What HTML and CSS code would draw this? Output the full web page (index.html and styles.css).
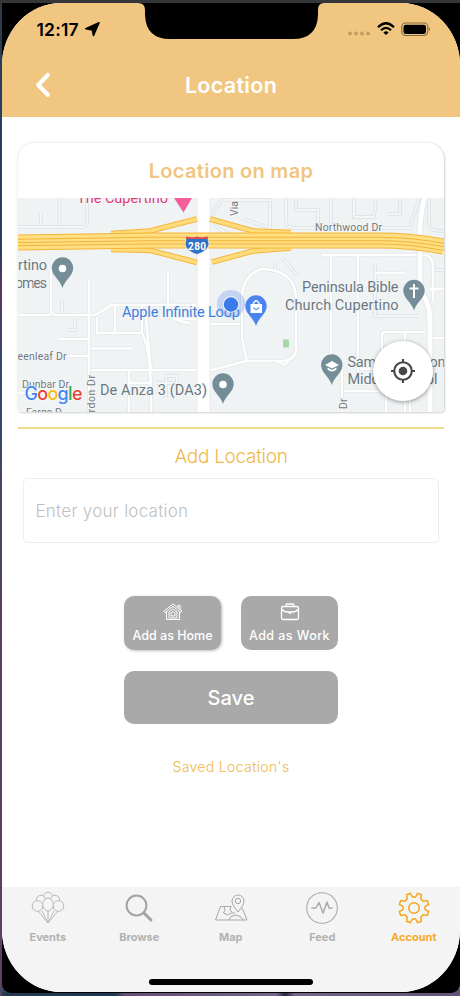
FILE: index.html
```html
<!DOCTYPE html>
<html lang="en">
<head>
<meta charset="utf-8">
<title>Location</title>
<link rel="stylesheet" href="styles.css">
</head>
<body>
<div class="device">
<div class="screen">
  <header class="header">
    <svg class="notch" viewBox="0 0 186 37" width="186" height="37"><path d="M0 0Q7 0 7 7V12Q8 36 32 36H155Q179 36 180 12V7Q180 0 186 0Z"/></svg>
    <div class="status">
      <div class="clock"><span>12:17</span><svg width="15" height="15" viewBox="0 0 15 15"><path d="M14 .8 8.500 13.500 7.400 8 .9 6.800Z" stroke="#000" stroke-width="1.600" stroke-linejoin="round"/></svg></div>
      <div class="signals">
        <svg width="23" height="15" viewBox="0 0 23 15" fill="#c39b63"><circle cx="2" cy="11.500" r="1.900"/><circle cx="8" cy="11.500" r="1.900"/><circle cx="14" cy="11.500" r="1.900"/><circle cx="20" cy="11.500" r="1.900"/></svg>
        <svg width="18" height="14" viewBox="0 0 18 14" fill="none" stroke="#000" stroke-width="2.300"><path d="M1 5.200Q9-2.600 17 5.200M4 8.300Q9 3.400 14 8.300"/><path d="M6.400 10.400Q9 8.200 11.600 10.400L9 13Z" fill="#000" stroke="none"/></svg>
        <svg width="30" height="15" viewBox="0 0 30 15"><rect x=".8" y="1" width="26" height="12.500" rx="3.700" fill="none" stroke="#82683f" stroke-width="1.100"/><rect x="2.500" y="2.700" width="22.500" height="9.200" rx="2.200"/><path d="M28 5.300Q30 7.200 28 9.200Z" fill="#82683f"/></svg>
      </div>
    </div>
    <div class="titlebar">
      <svg class="back" width="16" height="26" viewBox="0 0 16 26"><path d="M12.800 3 3.200 13 12.800 22.800" fill="none" stroke="#fff" stroke-width="4.200" stroke-linecap="round" stroke-linejoin="round"/></svg>
      <h1>Location</h1>
    </div>
  </header>

  <main class="content">
    <section class="map-card">
      <h2>Location on map</h2>
      <div class="map">
      <svg class="map-art" viewBox="18 198 426 214.500" width="426" height="214.500">
        <defs>
          <path id="pin" d="M0 20C-2 12-10.700 8-10.700 0A10.700 10.700 0 0 1 10.700 0C10.700 8 2 12 0 20Z"/>
          <g id="minor">
            <path d="M51 270V309Q51 315 56 315H94Q99 314 111 305H197M89 280V412M51 315H18M97 317V333H143M115 305V333M59 339H88M91 348.500H132M68 356H88M91 370H147M18 393H66M142 305V333Q152 352 151 412M129 371V412M128 383H150M144 370H212Q232 365 246 361H285Q298 358 296 344V296Q294 270 262 269Q244 274 242 294V338L247 361M145 309L151 370M168 270V309Q173 322 190 323M210 324H240M173 319H197M276 361L285 365L289 360M331 255V380M358 255V380M322 255H418M375 273H405M418 255H426Q433 257 433 268V301M382 375V335Q382 332 386 332H425M405 332V412M360 369H425M342 370V412M344 391H410V412M386 391V412M430 289H444M428 338H444"/>
          </g>
          <g id="faint">
            <path d="M18 227H82Q87 227 87 222V198M41 225V213M59.500 225V198M272 235H230L218 228Q212 221 214 210L222 200H270V228L244 219M286 198V222Q287 228 294 228H318V210H296V198M331 198V228M354 198V217H374L376 200M388 214H400V198M419 198L410 228H378M429 198V226Q431 231 444 231M375 263V316H418M430 270H444M282 258L298 276M275 262V268M62 300V312M75 318V330H68M156 383H177V376H166V398"/>
          </g>
          <path id="ramps" d="M111 233.500L150 231 197 219M111 249.500Q138 250 151 250.500L197 262.500M210 219L253 231 291 232.500M212 262L253 251 291 248"/>
        </defs>
        <rect x="18" y="198" width="426" height="215" fill="#f0f3f4"/>
        <use href="#faint" fill="none" stroke="#dcdfe3" stroke-width="3.400"/>
        <use href="#faint" fill="none" stroke="#f3f5f6" stroke-width="1.900"/>
        <use href="#minor" fill="none" stroke="#e3e6e9" stroke-width="4"/>
        <use href="#minor" fill="none" stroke="#fff" stroke-width="2.400"/>
        <path d="M203.500 198V412.500" stroke="#e7e9ec" stroke-width="14"/>
        <path d="M203.500 198V412.500" stroke="#fff" stroke-width="12"/>
        <path d="M425 198Q419 213 420 250V292Q431 302 430 325V413" fill="none" stroke="#e2e4e8" stroke-width="6.600"/>
        <path d="M425 198Q419 213 420 250V292Q431 302 430 325V413" fill="none" stroke="#fff" stroke-width="5"/>
        <use href="#ramps" fill="none" stroke="#f6b53a" stroke-width="5.600"/>
        <use href="#ramps" fill="none" stroke="#ffdc7b" stroke-width="3.600"/>
        <g fill="none">
          <path d="M18 242.500L150 240.500H380Q410 240.500 444 246.500" stroke="#f5b437" stroke-width="16"/>
          <path d="M18 242.500L150 240.500H380Q410 240.500 444 246.500" stroke="#ffdf82" stroke-width="14"/>
          <path d="M18 239.300L150 237.300H380Q412 237.300 444 243.500M18 242.500L150 240.700H380Q410 240.700 444 246.700M18 245.700L150 244H380Q409 244 444 250.500" stroke="#f3b33a" stroke-width="1.100"/>
        </g>
        <rect x="283" y="339.500" width="6" height="8" fill="#a5d7ab"/>
        <path d="M186.500 237Q191 239 197 237Q203 239 207.500 237L209 244Q208 251 197 254.500Q186 251 185 244Z" fill="#2f71c9" stroke="#fff" stroke-width=".6"/>
        <path d="M186.500 236.300Q191 238.300 197 236.500Q203 238.300 207.500 236.300L208.200 239H185.800Z" fill="#d84b50"/>
        <text x="188" y="249.500" class="shield" textLength="18">280</text>
        <g class="label">
          <text x="77" y="203" class="pink" textLength="91">The Cupertino</text>
          <text x="18" y="270" textLength="29">rtino</text>
          <text x="15" y="287.700" textLength="32">omes</text>
          <text x="302" y="292" textLength="96.500">Peninsula Bible</text>
          <text x="285" y="309.500" textLength="113.500">Church Cupertino</text>
          <text x="100" y="394.500" textLength="107">De Anza 3 (DA3)</text>
          <text x="347.500" y="366.500" textLength="98">Sam H. Lawson</text>
          <text x="347.500" y="384" textLength="90">Middle School</text>
          <text x="122" y="316.500" class="blue" textLength="118">Apple Infinite Loop</text>
        </g>
        <g class="street">
          <text x="315" y="231" textLength="67">Northwood Dr</text>
          <text x="17.500" y="359.500" textLength="49">eenleaf Dr</text>
          <text x="22" y="388" textLength="47">Dunbar Dr</text>
          <text x="26" y="415.500" textLength="36">Fargo D</text>
          <text transform="translate(237.500 216) rotate(-90)">Via Roma</text>
          <text transform="translate(94.500 425) rotate(-90)" textLength="50">eardon Dr</text>
          <text transform="translate(346.500 409) rotate(-90)">Dr</text>
        </g>
        <path d="M174 198H192L183.500 212.500Z" fill="#f4619a"/>
        <g fill="#758d97">
          <use href="#pin" x="62.500" y="268"/><use href="#pin" x="223" y="384"/>
          <use href="#pin" x="414" y="290.500"/><use href="#pin" x="331.800" y="365"/>
        </g>
        <g fill="#fff"><circle cx="62.500" cy="268.500" r="3.800"/><circle cx="223" cy="384.500" r="3.800"/><path d="M325 365L332 361 339 365 332 368.500Z"/><path d="M327.500 367.500V369.500Q332 373.500 336.500 369.500V367.500L332 370Z"/></g>
        <path d="M414 284V298M409.500 288.500H418.500" stroke="#fff" stroke-width="2"/>
        <use href="#pin" x="256" y="306" fill="#4b83ef"/>
        <path d="M250.500 304H262V313H250.500Z" fill="#fff"/><path d="M253.500 305V303Q256.200 298.500 259 303V305" fill="none" stroke="#fff" stroke-width="1.400"/><path d="M253.500 307.500Q256.200 311.500 259 307.500" fill="none" stroke="#4b83ef" stroke-width="1.200"/>
        <circle cx="231" cy="304" r="14" fill="#5c8cea" opacity=".3"/>
        <circle cx="231" cy="304.500" r="8.300" fill="#fff" opacity=".7"/>
        <circle cx="231" cy="304.500" r="7.200" fill="#3a7bea"/>
        <text x="24.500" y="399.500" class="google" textLength="58"><tspan fill="#4285f4">G</tspan><tspan fill="#ea4335">o</tspan><tspan fill="#fbbc05">o</tspan><tspan fill="#4285f4">g</tspan><tspan fill="#34a853">l</tspan><tspan fill="#ea4335">e</tspan></text>
      </svg>
      <button class="locate" aria-label="My location"><svg width="26" height="26" viewBox="0 0 26 26" fill="none" stroke="#474747" stroke-width="2.100"><circle cx="13" cy="13" r="8.800"/><circle cx="13" cy="13" r="4.300" fill="#474747" stroke="none"/><path d="M13 1V4.500M13 21.500V25M1 13H4.500M21.500 13H25"/></svg></button>
      </div>
    </section>

    <hr class="divider">
    <h3>Add Location</h3>
    <div class="field">Enter your location</div>

    <div class="actions">
      <div class="tags">
        <div class="btn tag raised">
          <svg width="20" height="18" viewBox="0 0 20 18" fill="none" stroke="#fff" stroke-width="1" stroke-linecap="round" stroke-linejoin="round"><path d="M1 8 10 1 19 8 17.700 9.500 10 3.300 2.300 9.500ZM3.500 9V16.500H16.500V9M15 4V2.300H17V6.200M6 14.500V9L10 5.800 14 9V14.500ZM8 12.500V10L10 8.500 12 10V12.500Z"/></svg>
          <span>Add as Home</span>
        </div>
        <div class="btn tag">
          <svg width="20" height="18" viewBox="0 0 20 18" fill="none" stroke="#fff" stroke-width="1.300" stroke-linejoin="round"><rect x="1.500" y="3.500" width="17" height="13" rx="1.800"/><path d="M6 3.500 6.500 1H13.500L14 3.500M1.500 6Q4 9 8 9H12Q16 9 18.500 6M8 8.500Q10 12 12 8.500"/></svg>
          <span class="wide">Add as Work</span>
        </div>
      </div>
      <div class="btn save">Save</div>
    </div>
    <p class="saved">Saved Location's</p>
  </main>

  <nav class="tabs">
    <div class="tab"><svg width="34" height="34" viewBox="0 0 34 34" fill="#f4f4f4" stroke="#b2b2b2" stroke-width=".9"><path d="M7 20 17 32 27 20M11 20 17 32 23 20M17 19V32" fill="none"/><circle cx="17" cy="6" r="4.700"/><circle cx="10" cy="9" r="4.700"/><circle cx="24" cy="9" r="4.700"/><circle cx="6.500" cy="15" r="5.300"/><circle cx="27.500" cy="15" r="5.300"/><ellipse cx="17" cy="13.500" rx="5.300" ry="6.500"/></svg><span>Events</span></div>
    <div class="tab"><svg width="34" height="34" viewBox="0 0 34 34" fill="none" stroke="#a4a4a4" stroke-linecap="round"><circle cx="14.500" cy="14.500" r="9.900" stroke-width="2"/><path d="M22 22 29 29" stroke-width="3"/></svg><span>Browse</span></div>
    <div class="tab"><svg width="34" height="34" viewBox="0 0 34 34" fill="none" stroke="#a8a8a8" stroke-width="1"><path d="M17 15.500H6.500L1.500 29H33L28 16.500M10 15.500 11 19 9.500 22 14 24 17 22H21M17 15.500 16 19 18 21M15 29 17 25.500 22 24 27 26 29 29"/><path d="M24 21Q18 14 18 10A6 6 0 0 1 30 10Q30 14 24 21Z" fill="#f4f4f4"/><circle cx="24" cy="10" r="2.700"/></svg><span>Map</span></div>
    <div class="tab"><svg width="34" height="34" viewBox="0 0 34 34" fill="none" stroke="#aaa" stroke-linecap="round" stroke-linejoin="round"><circle cx="17" cy="17" r="15.300" stroke-width="1.100"/><path d="M7 17H11L14 11.500 18 22 22 11 24 17H27" stroke-width="1.500"/></svg><span>Feed</span></div>
    <div class="tab active"><svg width="34" height="34" viewBox="0 0 34 34" fill="none" stroke="#f5a71e" stroke-width="1.500" stroke-linejoin="round"><path d="M15.400 6 13.500 2.300 9.600 3.700 10.200 7.900 7.900 10.200 3.700 9.600 2.300 13.500 6 15.400V18.600L2.300 20.500 3.700 24.400 7.900 23.800 10.200 26.100 9.600 30.300 13.500 31.700 15.400 28H18.600L20.500 31.700 24.400 30.300 23.800 26.100 26.100 23.800 30.300 24.400 31.700 20.500 28 18.600V15.400L31.700 13.500 30.300 9.600 26.100 10.200 23.800 7.900 24.400 3.700 20.500 2.300 18.600 6Z"/><circle cx="17" cy="17" r="5.300"/></svg><span>Account</span></div>
    <div class="home-bar"></div>
  </nav>
</div>
</div>
</body>
</html>
```
FILE: styles.css
```css
* { box-sizing: border-box; }
html { background: linear-gradient(90deg, #30486b, #553c73 50%, #655276); }
body {
  margin: 0;
  width: 460px;
  height: 996px;
  overflow: hidden;
  padding: 3px 0 0 2px;
  font-family: Inter, "Liberation Sans", sans-serif;
  background:
    linear-gradient(#343638, #343638) top / 100% 3px no-repeat,
    linear-gradient(#303841, #28405d 10%, #263f60 25%, #593461 29%, #314b68 37%, #554063 60%, #58445e 100%) left / 2px 100% no-repeat,
    linear-gradient(90deg, #26384e, #1c3853 25%, #655070 27%, #77628a 60%, #242938 62%, #77628a 64%, #655276) bottom / 100% 4px no-repeat;
}
svg { display: block; flex: none; }
h1, h2, h3, p { margin: 0; }
.device { width: 458px; height: 990px; background: #000; border-radius: 0 0 9px 9px; }
.screen {
  display: flex;
  flex-direction: column;
  width: 458px;
  height: 989px;
  overflow: hidden;
  background: #fff;
  border-radius: 59px / 62px;
}
.header { position: relative; height: 114px; background: #f1c680; }
.notch { position: absolute; left: 136px; top: 0; }
.status { display: flex; justify-content: space-between; align-items: center; height: 52px; padding: 0 29px 0 34.500px; }
.clock, .signals { display: flex; align-items: center; }
.clock { gap: 6px; font-size: 17.500px; font-weight: 600; letter-spacing: .2px; }
.signals { gap: 6px; }
.titlebar { display: grid; grid-template-columns: 60px 1fr 60px; align-items: center; height: 60px; }
.back { margin-left: 33px; }
h1 { color: #fff; font-size: 21.500px; font-weight: 600; text-align: center; line-height: 30px; letter-spacing: .3px; }
.content { flex: 1; padding: 26px 16px 0; }
.map-card {
  width: 426px;
  height: 269px;
  overflow: hidden;
  background: #fff;
  border-radius: 16px 16px 4px 4px;
  box-shadow: 0 0 3px #0002, 1px 1px 2px #0002;
}
h2 { height: 54.500px; padding-top: 1px; color: #efc581; font-size: 20px; font-weight: 600; line-height: 54px; text-align: center; letter-spacing: .3px; }
.map { position: relative; }
.label { font: 14.500px Roboto, sans-serif; fill: #6b7780; paint-order: stroke; stroke: #f5f7f8; stroke-width: 1.500px; }
.label .blue { fill: #3b80df; }
.label .pink { fill: #df3c7c; }
.street { font: 10.500px Roboto, sans-serif; fill: #72777b; paint-order: stroke; stroke: #f5f7f8; stroke-width: 1.500px; }
.shield { font: bold 10px Roboto, sans-serif; fill: #fff; }
.google { font: 500 18px Inter, sans-serif; paint-order: stroke; stroke: #fff; stroke-width: 1px; }
.locate {
  position: absolute;
  right: 11.500px;
  top: 143px;
  display: grid;
  place-items: center;
  width: 60px;
  height: 60px;
  padding: 0;
  border: 0;
  border-radius: 50%;
  background: #fff;
  box-shadow: 0 1px 4px #0006;
}
.divider { width: 426px; height: 2px; margin: 15px 0 0; border: 0; background: #eddc8b; }
h3 { margin-top: 13px; color: #edb84a; font-size: 19px; font-weight: 350; line-height: 30px; text-align: center; letter-spacing: -.3px; }
.field {
  width: 416px;
  height: 65px;
  margin: 6px 0 0 5px;
  padding: 0 11.500px;
  border: 1px solid #eee;
  border-radius: 5px;
  color: #c0c0c0;
  font-size: 17px;
  font-weight: 350;
  line-height: 64px;
  letter-spacing: .25px;
}
.actions { width: 214px; margin: 53px auto 0; }
.tags { display: flex; justify-content: space-between; }
.btn { border-radius: 10px; background: #a9a9a9; color: #fff; text-align: center; }
.tag { display: flex; flex-direction: column; align-items: center; width: 97px; height: 53.500px; padding-top: 7px; font-size: 12.500px; font-weight: 500; line-height: 18px; white-space: nowrap; }
.tag span { margin-top: 6px; }
.tag .wide { letter-spacing: .45px; }
.raised { box-shadow: 1px 1px 3px #0004; }
.save { height: 53.500px; margin-top: 21px; font-size: 20px; font-weight: 500; line-height: 54px; }
.saved { margin-top: 32px; color: #edb84a; font-size: 14px; font-weight: 350; line-height: 22px; text-align: center; letter-spacing: .35px; }
.tabs { position: relative; display: flex; height: 105.500px; padding-right: .5px; background: #f4f4f4; }
.tab { flex: 1; display: flex; flex-direction: column; align-items: center; padding-top: 4px; color: #b2b2b2; font-size: 11px; font-weight: 700; }
.tab span { margin-top: 4px; line-height: 16px; }
.tab.active { color: #f5ab27; }
.home-bar { position: absolute; left: 147px; bottom: 7.500px; width: 164px; height: 5.500px; border-radius: 3px; background: #000; }
```
